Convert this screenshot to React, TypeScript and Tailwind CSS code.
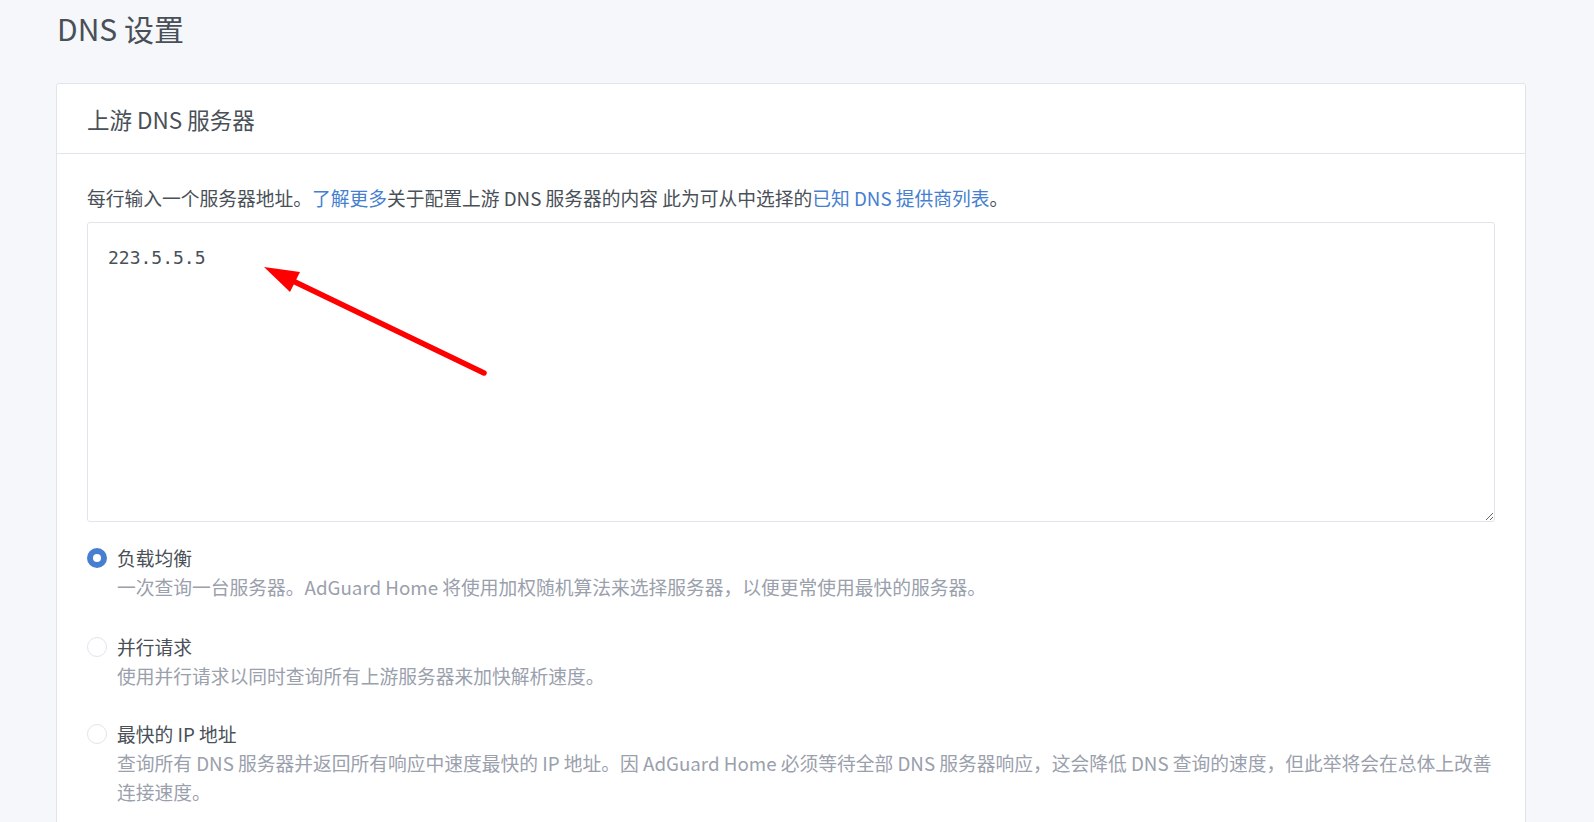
import React from "react";

const FONT = '"Noto Sans CJK SC", "Noto Sans", sans-serif';

function Radio({ checked }: { checked?: boolean }) {
  if (checked) {
    return (
      <span className="mt-[4.5px] flex h-[20px] w-[20px] shrink-0 items-center justify-center rounded-full bg-[#467fcf]">
        <span className="h-[8px] w-[8px] rounded-full bg-white" />
      </span>
    );
  }
  return (
    <span className="mt-[4.5px] h-[20px] w-[20px] shrink-0 rounded-full border border-[#e0e5ec] bg-white" />
  );
}

function Option({
  checked,
  label,
  desc,
  className,
}: {
  checked?: boolean;
  label: string;
  desc: React.ReactNode;
  className?: string;
}) {
  return (
    <div className={"flex items-start gap-[10px] " + (className ?? "")}>
      <Radio checked={checked} />
      <div className="flex flex-col">
        <div className="text-[18.75px] leading-[29px] text-[#495057]">{label}</div>
        <div className="text-[18.75px] leading-[29px] text-[#9aa0ac]">{desc}</div>
      </div>
    </div>
  );
}

export default function App() {
  return (
    <div
      className="relative min-h-screen w-full overflow-hidden bg-[#f5f7fb]"
      style={{ fontFamily: FONT }}
    >
      <div className="pl-[56px] pt-[10px]">
        <h1 className="ml-[1px] text-[30px] font-normal leading-[36px] text-[#495057]">
          DNS 设置
        </h1>
        <div className="mt-[37px] w-[1470px] rounded-[3px] border border-[#e0e5ec] bg-white">
          <div className="flex h-[70px] items-center border-b border-[#e0e5ec] px-[30px]">
            <h3 className="text-[22.5px] font-normal leading-[28px] text-[#495057]">
              上游 DNS 服务器
            </h3>
          </div>
          <div className="px-[30px] pt-[30px] pb-[40px]">
            <div className="text-[18.75px] leading-[28px] text-[#495057]">
              每行输入一个服务器地址。
              <a className="text-[#467fcf]">了解更多</a>
              关于配置上游 DNS 服务器的内容 此为可从中选择的
              <a className="text-[#467fcf]">已知 DNS 提供商列表</a>。
            </div>
            <textarea
              className="mt-[10px] block h-[300px] w-full rounded-[3px] border border-[#e0e5ec] bg-white pl-[20px] pt-[21px] text-[18px] leading-[27px] text-[#495057] outline-none"
              style={{ fontFamily: '"DejaVu Sans Mono", monospace' }}
              defaultValue="223.5.5.5"
              spellCheck={false}
            />
            <div className="mt-[21px] flex flex-col">
              <Option
                checked
                label="负载均衡"
                desc="一次查询一台服务器。AdGuard Home 将使用加权随机算法来选择服务器，以便更常使用最快的服务器。"
              />
              <Option
                className="mt-[31px]"
                label="并行请求"
                desc="使用并行请求以同时查询所有上游服务器来加快解析速度。"
              />
              <Option
                className="mt-[29px]"
                label="最快的 IP 地址"
                desc={
                  <>
                    查询所有 DNS 服务器并返回所有响应中速度最快的 IP 地址。因 AdGuard Home 必须等待全部 DNS 服务器响应，这会降低 DNS 查询的速度，但此举将会在总体上改善
                    <br />
                    连接速度。
                  </>
                }
              />
            </div>
          </div>
        </div>
      </div>
      <svg
        className="pointer-events-none absolute left-0 top-0"
        width="1594"
        height="822"
        viewBox="0 0 1594 822"
      >
        <line
          x1="484"
          y1="373"
          x2="293"
          y2="281"
          stroke="#ff0000"
          strokeWidth="5.5"
          strokeLinecap="round"
        />
        <polygon points="264,267 300,272 290,292" fill="#ff0000" />
      </svg>
    </div>
  );
}
